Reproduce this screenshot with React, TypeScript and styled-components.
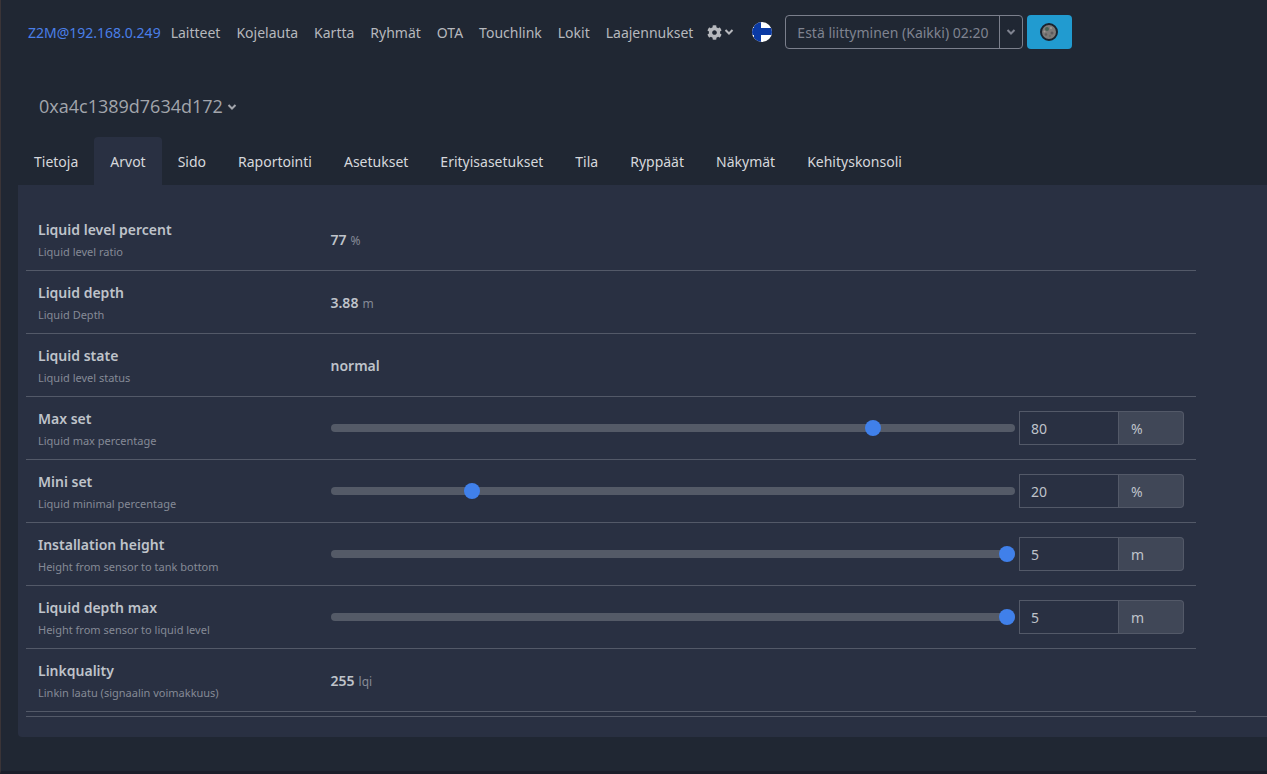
import React, { useState } from "react";
import styled, { createGlobalStyle } from "styled-components";
import { FaCog } from "react-icons/fa";

const GlobalStyle = createGlobalStyle`
  * { box-sizing: border-box; }
  body {
    margin: 0;
    background: #202733;
    color: #bfc3ca;
    font-family: "Noto Sans", "Open Sans", sans-serif;
    font-size: 14px;
    line-height: 22px;
  }
  button, input { font: inherit; color: inherit; }
`;

const Page = styled.div`
  min-height: 100vh;
  border-left: 1px solid #3a3437;
  border-bottom: 3px solid #1b1e2a;
  padding-left: 17px;
`;

const Navbar = styled.header`
  display: flex;
  align-items: center;
  height: 64px;
  padding-left: 10px;
`;

const Brand = styled.a`
  margin-right: 2px;
  padding-top: 2px;
  color: #4a7fe8;
  text-decoration: none;
  white-space: nowrap;
`;

const NavList = styled.nav`
  display: flex;
  align-items: center;
`;

const NavLink = styled.a`
  padding: 2px 8px 0;
  color: #b6b8bd;
  text-decoration: none;
  white-space: nowrap;
`;

const IconButton = styled.button`
  display: flex;
  align-items: center;
  gap: 2px;
  padding: 0;
  border: 0;
  background: none;
  color: #b6b8bd;
  margin-left: 6px;
`;

const FlagButton = styled(IconButton)`
  margin: 0 13px 0 18px;
`;

const ButtonGroup = styled.div`
  display: flex;
  height: 34px;
  border: 1px solid #7b7f8c;
  border-radius: 4px;
  color: #7f8390;
`;

const JoinButton = styled.button`
  padding: 2px 10px 0 11px;
  border: 0;
  background: none;
  white-space: nowrap;
`;

const SplitButton = styled.button`
  display: flex;
  align-items: center;
  padding: 0 6px;
  border: 0;
  border-left: 1px solid #7b7f8c;
  background: none;
`;

const ThemeButton = styled.button`
  display: flex;
  align-items: center;
  justify-content: center;
  width: 45px;
  height: 34px;
  margin-left: 4px;
  padding: 0;
  border: 0;
  border-radius: 4px;
  background: #219bd0;
`;

const DeviceHeading = styled.h1`
  margin: 0;
  padding: 30px 21px 18px;
  font-family: "Open Sans", "Noto Sans", sans-serif;
  font-size: 18px;
  font-weight: 400;
  line-height: 25px;
`;

const DeviceButton = styled.button`
  display: flex;
  align-items: center;
  gap: 4px;
  padding: 0;
  border: 0;
  background: none;
  color: #a2a5ac;
`;

const Tabs = styled.nav`
  display: flex;
`;

const Tab = styled.a<{ $active?: boolean }>`
  padding: 14px 16px 12px;
  border-radius: 4px 4px 0 0;
  background: ${(p) => (p.$active ? "#293042" : "transparent")};
  color: #d6d8dc;
  text-decoration: none;
  white-space: nowrap;
`;

const Panel = styled.main`
  padding: 23px 0 20px 8px;
  border-radius: 0 0 0 4px;
  background: #293042;
`;

const Features = styled.div`
  margin-right: 71px;
`;

const Row = styled.div`
  display: grid;
  grid-template-columns: 1fr 3fr;
  align-items: center;
  height: 63px;
  border-bottom: 1px solid #535968;
`;

const LabelCell = styled.div`
  padding: 4px 12px 0;
`;

const Title = styled.label`
  display: block;
  font-weight: 600;
`;

const Description = styled.small`
  display: block;
  color: #858a96;
  font-size: 11px;
`;

const ValueCell = styled.div`
  display: flex;
  align-items: center;
  padding: 0 12px;
`;

const Reading = styled.div`
  padding-top: 2px;
`;

const Value = styled.strong`
  font-weight: 600;
`;

const Unit = styled.small`
  padding-left: 4px;
  color: #858a96;
  font-size: 12px;
`;

const Slider = styled.input`
  flex: 1;
  min-width: 0;
  height: 16px;
  margin: 0 4px 0 0;
  appearance: none;
  background: transparent;

  &::-webkit-slider-runnable-track {
    height: 8px;
    border-radius: 4px;
    background: #545a67;
  }
  &::-webkit-slider-thumb {
    appearance: none;
    width: 16px;
    height: 16px;
    margin-top: -4px;
    border-radius: 50%;
    background: #4080ea;
  }
`;

const InputGroup = styled.div`
  display: flex;
  height: 34px;
`;

const NumberInput = styled.input`
  width: 100px;
  padding: 1px 11px 0;
  border: 1px solid #535968;
  background: #293042;
  appearance: textfield;
  &::-webkit-inner-spin-button { display: none; }
`;

const UnitBox = styled.span`
  display: flex;
  align-items: center;
  width: 65px;
  padding: 1px 12px 0;
  border: 1px solid #535968;
  border-left: 0;
  border-radius: 0 4px 4px 0;
  background: #404757;
`;

const Divider = styled.hr`
  margin: 4px 0 0;
  border: 0;
  border-top: 1px solid #535968;
`;

const Chevron = () => (
  <svg width="10" height="8" viewBox="0 0 10 8" fill="none" stroke="currentColor" strokeWidth="2" aria-hidden="true">
    <path d="M1.5 2 L5 5.5 L8.5 2" />
  </svg>
);

const FinnishFlag = () => (
  <svg width="20" height="20" viewBox="0 0 20 20" aria-hidden="true">
    <clipPath id="flag-circle">
      <circle cx="10" cy="10" r="10" />
    </clipPath>
    <g clipPath="url(#flag-circle)">
      <rect width="20" height="20" fill="#fff" />
      <rect x="2" width="7" height="20" fill="#0b3aa4" />
      <rect y="6" width="20" height="7" fill="#0b3aa4" />
    </g>
  </svg>
);

const Moon = () => (
  <svg width="18" height="18" viewBox="0 0 18 18" aria-hidden="true">
    <circle cx="9" cy="9" r="8" fill="#7d7a78" stroke="#1a242e" strokeWidth="2" />
    <circle cx="7" cy="6" r="2" fill="#466357" />
    <circle cx="12" cy="10" r="1.5" fill="#5c5a5c" />
    <circle cx="6" cy="11.5" r="1.2" fill="#625f5e" />
    <circle cx="11" cy="5" r="1" fill="#a39e98" />
    <circle cx="10" cy="13" r="1.2" fill="#68706a" />
    <circle cx="4.5" cy="8.5" r="1" fill="#a19b95" />
  </svg>
);

const links = ["Laitteet", "Kojelauta", "Kartta", "Ryhmät", "OTA", "Touchlink", "Lokit", "Laajennukset"];

const tabs = [
  "Tietoja", "Arvot", "Sido", "Raportointi", "Asetukset", "Erityisasetukset",
  "Tila", "Ryppäät", "Näkymät", "Kehityskonsoli",
];

interface Feature {
  title: string;
  description: string;
  value: string | number;
  unit?: string;
  max?: number;
}

const features: Feature[] = [
  { title: "Liquid level percent", description: "Liquid level ratio", value: 77, unit: "%" },
  { title: "Liquid depth", description: "Liquid Depth", value: 3.88, unit: "m" },
  { title: "Liquid state", description: "Liquid level status", value: "normal" },
  { title: "Max set", description: "Liquid max percentage", value: 80, unit: "%", max: 100 },
  { title: "Mini set", description: "Liquid minimal percentage", value: 20, unit: "%", max: 100 },
  { title: "Installation height", description: "Height from sensor to tank bottom", value: 5, unit: "m", max: 5 },
  { title: "Liquid depth max", description: "Height from sensor to liquid level", value: 5, unit: "m", max: 5 },
  { title: "Linkquality", description: "Linkin laatu (signaalin voimakkuus)", value: 255, unit: "lqi" },
];

function FeatureRow({ feature }: { feature: Feature }) {
  const [value, setValue] = useState(feature.value);
  const id = feature.title.toLowerCase().replace(/ /g, "-");
  const editable = feature.max !== undefined;
  return (
    <Row>
      <LabelCell>
        <Title as={editable ? "label" : "strong"} htmlFor={editable ? id : undefined}>
          {feature.title}
        </Title>
        <Description>{feature.description}</Description>
      </LabelCell>
      <ValueCell>
        {editable ? (
          <>
            <Slider
              type="range"
              aria-label={feature.title}
              min={0}
              max={feature.max}
              value={value}
              onChange={(e) => setValue(e.target.value)}
            />
            <InputGroup>
              <NumberInput
                id={id}
                type="number"
                max={feature.max}
                value={value}
                onChange={(e) => setValue(e.target.value)}
              />
              <UnitBox>{feature.unit}</UnitBox>
            </InputGroup>
          </>
        ) : (
          <Reading>
            <Value>{value}</Value>
            {feature.unit && <Unit>{feature.unit}</Unit>}
          </Reading>
        )}
      </ValueCell>
    </Row>
  );
}

export default function App() {
  return (
    <Page>
      <GlobalStyle />
      <Navbar>
        <Brand href="#">Z2M@192.168.0.249</Brand>
        <NavList>
          {links.map((link) => (
            <NavLink key={link} href="#">{link}</NavLink>
          ))}
        </NavList>
        <IconButton aria-label="Asetukset">
          <FaCog size={15} />
          <Chevron />
        </IconButton>
        <FlagButton aria-label="Suomi">
          <FinnishFlag />
        </FlagButton>
        <ButtonGroup>
          <JoinButton>Estä liittyminen (Kaikki) 02:20</JoinButton>
          <SplitButton aria-label="Valitse laite">
            <Chevron />
          </SplitButton>
        </ButtonGroup>
        <ThemeButton aria-label="Teema">
          <Moon />
        </ThemeButton>
      </Navbar>
      <DeviceHeading>
        <DeviceButton>
          0xa4c1389d7634d172
          <Chevron />
        </DeviceButton>
      </DeviceHeading>
      <Tabs>
        {tabs.map((tab) => (
          <Tab key={tab} href="#" $active={tab === "Arvot"}>{tab}</Tab>
        ))}
      </Tabs>
      <Panel>
        <Features>
          {features.map((feature) => (
            <FeatureRow key={feature.title} feature={feature} />
          ))}
        </Features>
        <Divider />
      </Panel>
    </Page>
  );
}
